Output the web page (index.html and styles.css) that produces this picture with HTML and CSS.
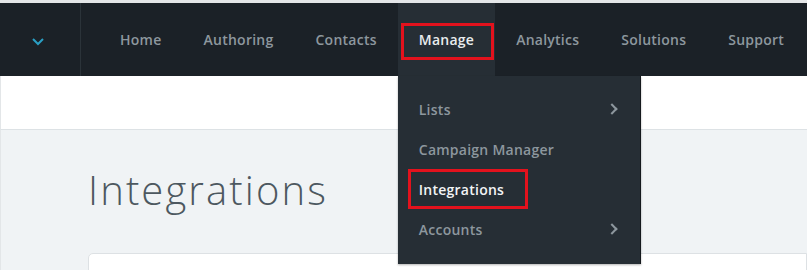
FILE: index.html
```html
<!DOCTYPE html>
<html lang="en">
<head>
    <meta charset="UTF-8">
    <meta name="viewport" content="width=device-width, initial-scale=1.0">
    <title>Integrations</title>
    <link rel="stylesheet" href="styles.css">
</head>
<body>
    <div class="topline"></div>
    <header class="nav">
        <div class="nav-toggle">
            <svg width="14" height="9" viewBox="0 0 14 9">
                <path d="M2 2 L7 7 L12 2" fill="none" stroke="#2a9fc4" stroke-width="2"/>
            </svg>
        </div>
        <ul class="nav-menu">
            <li class="nav-item">Home</li>
            <li class="nav-item">Authoring</li>
            <li class="nav-item">Contacts</li>
            <li class="nav-item active">
                Manage
                <span class="callout callout-tab"></span>
                <ul class="dropdown">
                    <li class="dropdown-item">Lists <span class="arrow"></span></li>
                    <li class="dropdown-item">Campaign Manager</li>
                    <li class="dropdown-item current">
                        Integrations
                        <span class="callout callout-link"></span>
                    </li>
                    <li class="dropdown-item">Accounts <span class="arrow"></span></li>
                </ul>
            </li>
            <li class="nav-item">Analytics</li>
            <li class="nav-item">Solutions</li>
            <li class="nav-item">Support</li>
        </ul>
    </header>

    <div class="subbar"></div>

    <main class="page">
        <h1>Integrations</h1>
        <div class="card"></div>
    </main>
</body>
</html>
```

FILE: styles.css
```css
* {
    margin: 0;
    padding: 0;
    box-sizing: border-box;
}

body {
    font-family: 'Open Sans', 'Lato', sans-serif;
    background: #ffffff;
    color: #4a555e;
    width: 807px;
    height: 271px;
    overflow: hidden;
}

ul {
    list-style: none;
}

.topline {
    height: 3px;
    background: #e4e6e8;
}

.nav {
    display: flex;
    height: 73px;
    background: #1b2127;
    position: relative;
    z-index: 2;
}

.nav-toggle {
    width: 81px;
    display: flex;
    align-items: center;
    justify-content: center;
    border-right: 1px solid #2b3339;
}

.nav-toggle svg {
    margin-top: 3px;
    margin-left: -4px;
}

.nav-menu {
    display: flex;
    padding-left: 18px;
}

.nav-item {
    position: relative;
    display: flex;
    align-items: center;
    padding: 0 21px;
    font-size: 14px;
    font-weight: 600;
    letter-spacing: 0.25px;
    color: #8d979e;
    white-space: nowrap;
}

.nav-item.active {
    background: #262e35;
    color: #e9ecee;
}

.callout {
    position: absolute;
    border: 3px solid #e3121d;
}

.callout-tab {
    left: 3px;
    right: 1px;
    top: 20px;
    bottom: 16px;
}

.dropdown {
    position: absolute;
    left: 0;
    top: 100%;
    width: 243px;
    padding: 13px 0 15px;
    background: #262e35;
    border-right: 1px solid #15191d;
    box-shadow: 0 1px 2px rgba(0, 0, 0, 0.3);
}

.dropdown-item {
    position: relative;
    display: flex;
    align-items: center;
    justify-content: space-between;
    height: 40px;
    padding: 0 20px 0 21px;
    font-size: 14px;
    font-weight: 600;
    letter-spacing: 0.25px;
    color: #8d979e;
}

.dropdown-item.current {
    color: #f2f4f5;
}

.callout-link {
    left: 10px;
    width: 120px;
    top: 0;
    bottom: 0;
}

.arrow {
    width: 8px;
    height: 8px;
    border-top: 2px solid #8d979e;
    border-right: 2px solid #8d979e;
    transform: rotate(45deg);
    margin-right: 4px;
}

.subbar {
    height: 54px;
    background: #ffffff;
    border-bottom: 1px solid #dde2e5;
    border-left: 1px solid #e3e6e8;
}

.page {
    background: #f0f3f5;
    padding: 36px 0 0 87px;
    height: 140px;
    overflow: hidden;
    border-left: 1px solid #e3e6e8;
}

h1 {
    font-size: 40px;
    font-weight: 300;
    color: #4d5860;
    letter-spacing: 2.1px;
    line-height: 48px;
}

.card {
    margin-top: 39px;
    height: 60px;
    background: #ffffff;
    border: 1px solid #dde1e4;
    border-radius: 5px 0 0 0;
}
```
